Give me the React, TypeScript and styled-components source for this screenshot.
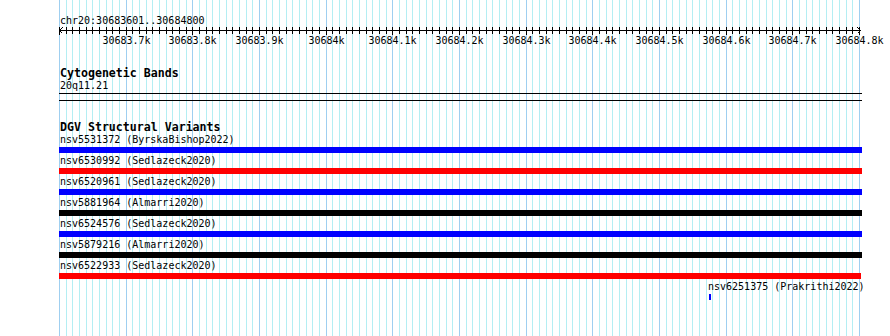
import React from "react";
import styled, { createGlobalStyle } from "styled-components";

// view covers interbase 30683600 .. 30684800 at 2/3 px per bp
const VIEW_START = 30683600;
const VIEW_END = 30684800;
const BP_PX = 2 / 3;
const VIEW_WIDTH = 803;

const toPx = (bp: number) => Math.round((bp - VIEW_START) * BP_PX);

type Feature = {
  name: string;
  study: string;
  color: string;
  start: number;
  end: number;
};

const features: Feature[] = [
  { name: "nsv5531372", study: "ByrskaBishop2022", color: "#0000ff", start: 30683600, end: 30684805 },
  { name: "nsv6530992", study: "Sedlazeck2020", color: "#ff0000", start: 30683600, end: 30684805 },
  { name: "nsv6520961", study: "Sedlazeck2020", color: "#0000ff", start: 30683600, end: 30684805 },
  { name: "nsv5881964", study: "Almarri2020", color: "#000000", start: 30683600, end: 30684805 },
  { name: "nsv6524576", study: "Sedlazeck2020", color: "#0000ff", start: 30683600, end: 30684805 },
  { name: "nsv5879216", study: "Almarri2020", color: "#000000", start: 30683600, end: 30684805 },
  { name: "nsv6522933", study: "Sedlazeck2020", color: "#ff0000", start: 30683600, end: 30684803 },
  { name: "nsv6251375", study: "Prakrithi2022", color: "#0000ff", start: 30684575, end: 30684578 },
];

const ticks: number[] = [];
for (let bp = VIEW_START; bp <= VIEW_END; bp += 10) ticks.push(bp);

const GlobalStyle = createGlobalStyle`
  html, body {
    margin: 0;
    padding: 0;
    background: #fff;
  }
  body {
    font-family: "DejaVu Sans Mono", "Liberation Mono", monospace;
    font-size: 10px;
    color: #000;
  }
`;

const Page = styled.div`
  min-height: 336px;
  padding-left: 59px;
  overflow: hidden;
`;

const View = styled.div`
  position: relative;
  width: ${VIEW_WIDTH}px;
  min-height: 336px;
`;

const GridLayer = styled.svg`
  position: absolute;
  top: 0;
  left: 0;
  width: ${VIEW_WIDTH}px;
  height: 100%;
  z-index: 0;
`;

const Tracks = styled.div`
  position: relative;
  z-index: 1;
  display: flex;
  flex-direction: column;
`;

const Ruler = styled.div`
  display: flex;
  flex-direction: column;
  padding-top: 15px;
`;

const LocationLabel = styled.div`
  height: 12px;
  line-height: 12px;
  padding-left: 1px;
  white-space: nowrap;
`;

const ScaleBar = styled.svg`
  display: block;
`;

const ScaleLabels = styled.div`
  position: relative;
  height: 12px;
  line-height: 12px;
`;

const ScaleLabel = styled.span`
  position: absolute;
  top: 0;
  transform: translateX(-50%);
  white-space: nowrap;
`;

const Track = styled.section`
  display: flex;
  flex-direction: column;
  margin-top: 20px;
`;

const TrackTitle = styled.div`
  height: 13px;
  line-height: 13px;
  padding-left: 1px;
  font-weight: bold;
  font-size: 11.6px;
  white-space: nowrap;
`;

const BandLabel = styled.div`
  height: 12px;
  line-height: 12px;
  padding-left: 1px;
`;

const Band = styled.div`
  height: 6px;
  margin-top: 1px;
  border-top: 1px solid #000;
  border-bottom: 1px solid #000;
`;

const FeatureRow = styled.div`
  display: flex;
  flex-direction: column;
  height: 21px;
`;

const FeatureLabel = styled.div`
  height: 12px;
  line-height: 12px;
  white-space: nowrap;
`;

const FeatureBar = styled.div<{ $color: string }>`
  height: 6px;
  margin-top: 1px;
  background: ${({ $color }) => $color};
`;

const scaleText = (bp: number) => `${(bp / 1000).toFixed(1).replace(/\.0$/, "")}k`;

const App = () => {
  return (
    <Page>
      <GlobalStyle />
      <View>
        <GridLayer preserveAspectRatio="none" shapeRendering="crispEdges">
          {ticks.map((bp) => (
            <rect
              key={bp}
              x={toPx(bp)}
              y={0}
              width={1}
              height="100%"
              fill={bp % 100 === 0 ? "#9fcff0" : "#b4eef3"}
            />
          ))}
        </GridLayer>
        <Tracks>
          <Ruler>
            <LocationLabel>chr20:30683601..30684800</LocationLabel>
            <ScaleBar width={VIEW_WIDTH} height={8} shapeRendering="crispEdges">
              <rect x={0} y={3} width={802} height={1} fill="#000" />
              {ticks.map((bp) => (
                <rect key={bp} x={toPx(bp)} y={0} width={1} height={bp % 100 === 0 ? 8 : 7} fill="#000" />
              ))}
              <path d="M0.5 3.5 L3.5 0.5 M0.5 3.5 L3.5 6.5" stroke="#000" fill="none" />
              <path d="M801.5 3.5 L798.5 0.5 M801.5 3.5 L798.5 6.5" stroke="#000" fill="none" />
            </ScaleBar>
            <ScaleLabels>
              {ticks
                .filter((bp) => bp % 100 === 0 && bp > VIEW_START)
                .map((bp) => (
                  <ScaleLabel key={bp} style={{ left: toPx(bp) + 0.5 }}>
                    {scaleText(bp)}
                  </ScaleLabel>
                ))}
            </ScaleLabels>
          </Ruler>

          <Track>
            <TrackTitle>Cytogenetic Bands</TrackTitle>
            <BandLabel>20q11.21</BandLabel>
            <Band />
          </Track>

          <Track>
            <TrackTitle>DGV Structural Variants</TrackTitle>
            {features.map((f) => {
              const left = toPx(f.start);
              const width = Math.max(2, toPx(f.end) - left);
              return (
                <FeatureRow key={f.name}>
                  <FeatureLabel style={{ marginLeft: left > 0 ? left - 1 : 1 }}>
                    {f.name} ({f.study})
                  </FeatureLabel>
                  <FeatureBar $color={f.color} style={{ marginLeft: left, width }} />
                </FeatureRow>
              );
            })}
          </Track>
        </Tracks>
      </View>
    </Page>
  );
};

export default App;
